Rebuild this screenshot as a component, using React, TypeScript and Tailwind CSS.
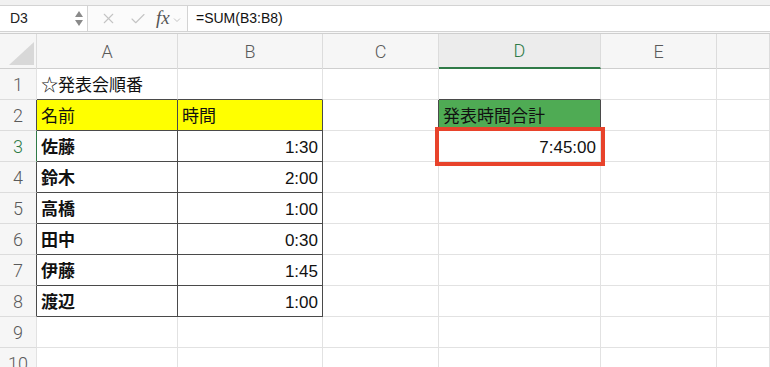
import { Check, X } from "lucide-react";

const cols = ["A", "B", "C", "D", "E", ""];
const colWidths = "grid-cols-[37px_141px_145px_116px_162px_116px_1fr]";

type Cell = { text?: string; align?: "left" | "right"; bold?: boolean; bg?: string };

const data: Record<number, Record<number, Cell>> = {
  1: { 1: { text: "☆発表会順番" } },
  2: {
    1: { text: "名前", bg: "bg-[#ffff00]" },
    2: { text: "時間", bg: "bg-[#ffff00]" },
    4: { text: "発表時間合計", bg: "bg-[#4fab54]" },
  },
  3: { 1: { text: "佐藤", bold: true }, 2: { text: "1:30", align: "right" }, 4: { text: "7:45:00", align: "right" } },
  4: { 1: { text: "鈴木", bold: true }, 2: { text: "2:00", align: "right" } },
  5: { 1: { text: "高橋", bold: true }, 2: { text: "1:00", align: "right" } },
  6: { 1: { text: "田中", bold: true }, 2: { text: "0:30", align: "right" } },
  7: { 1: { text: "伊藤", bold: true }, 2: { text: "1:45", align: "right" } },
  8: { 1: { text: "渡辺", bold: true }, 2: { text: "1:00", align: "right" } },
};

const rightColor = (r: number, c: number) => {
  if (r === 3 && c === 0) return "border-r-[#2f7a47]";
  if (r >= 2 && r <= 8 && c <= 2) return "border-r-[#4a4a4a]";
  if (r === 2 && (c === 3 || c === 4)) return "border-r-[#4a4a4a]";
  return "border-r-[#e2e2e2]";
};

const bottomColor = (r: number, c: number) => {
  if (r >= 1 && r <= 8 && (c === 1 || c === 2)) return "border-b-[#4a4a4a]";
  if ((r === 1 || r === 2) && c === 4) return "border-b-[#4a4a4a]";
  return "border-b-[#e2e2e2]";
};

const FormulaBar = () => (
  <div className="bg-[#f1f1f1] pt-[5px]">
    <div className="flex h-[27px] border-t border-b border-[#d3d3d3] bg-[#fbfbfb]">
      <div className="flex w-[88px] items-center justify-between border-r border-[#d3d3d3] bg-white pl-[10px] pr-[2px]">
        <span className="text-[14px] text-[#222]">D3</span>
        <div className="flex flex-col items-center gap-[3px] pr-[2px]">
          <span className="h-0 w-0 border-x-[4px] border-b-[6px] border-x-transparent border-b-[#8a8a8a]" />
          <span className="h-0 w-0 border-x-[4px] border-t-[6px] border-x-transparent border-t-[#8a8a8a]" />
        </div>
      </div>
      <div className="flex w-[99px] items-center pl-[12px]">
        <X size={17} strokeWidth={1.5} className="text-[#c4c4c4]" />
        <Check size={18} strokeWidth={1.5} className="ml-[12px] text-[#c4c4c4]" />
        <span className="ml-[9px] text-[19px] italic text-[#555]" style={{ fontFamily: '"Liberation Serif", serif' }}>
          fx
        </span>
        <svg width="8" height="6" viewBox="0 0 8 6" className="ml-[3px] mt-[3px]">
          <path d="M1 1.5 L4 4.5 L7 1.5" fill="none" stroke="#c4c4c4" strokeWidth="1" />
        </svg>
      </div>
      <div className="flex flex-1 items-center border-l border-[#d3d3d3] bg-white pl-[8px] text-[14px] text-[#111]">
        =SUM(B3:B8)
      </div>
    </div>
    <div className="h-[2px] bg-[#f7f7f7] border-b border-[#cfcfcf]" />
  </div>
);

const HeaderRow = () => (
  <div className={`grid ${colWidths} h-[35px] border-b border-[#cfcfcf] bg-[#f6f6f6]`}>
    <div className="border-r border-[#dcdcdc]">
      <svg width="37" height="35" viewBox="0 0 37 35" className="block">
        <path d="M9 31 L34 31 L34 8 Z" fill="#d8d8d8" />
      </svg>
    </div>
    {cols.map((c) => (
      <div
        key={c || "f"}
        className={
          c === "D"
            ? "flex items-center justify-center border-r border-[#dcdcdc] border-b-2 border-b-[#2f7a47] bg-[#ececec] text-[18px] font-light text-[#2f7a47]"
            : "flex items-center justify-center border-r border-[#dcdcdc] text-[18px] font-light text-[#5a5a5a]"
        }
        style={{ fontFamily: "Roboto, sans-serif" }}
      >
        {c}
      </div>
    ))}
  </div>
);

const App = () => {
  const rows = [1, 2, 3, 4, 5, 6, 7, 8, 9, 10];
  return (
    <div
      className="h-[367px] w-[770px] overflow-hidden bg-white"
      style={{ fontFamily: '"Liberation Sans", "Noto Sans CJK JP", sans-serif' }}
    >
      <FormulaBar />
      <HeaderRow />
      {rows.map((r) => (
        <div key={r} className={`grid ${colWidths} h-[31px]`}>
          {[0, 1, 2, 3, 4, 5, 6].map((c) => {
            if (c === 0) {
              return (
                <div
                  key={c}
                  className={`flex items-center justify-center border-r border-b bg-[#f6f6f6] text-[18px] font-light ${rightColor(r, c)} border-b-[#dcdcdc] ${
                    r === 3 ? "text-[#2f7a47]" : "text-[#5a5a5a]"
                  }`}
                  style={{ fontFamily: "Roboto, sans-serif" }}
                >
                  {r}
                </div>
              );
            }
            const cell = data[r]?.[c];
            const isTotal = r === 3 && c === 4;
            return (
              <div
                key={c}
                className={`flex items-center overflow-visible whitespace-nowrap border-r border-b pt-[3px] text-[17px] text-[#111] ${rightColor(r, c)} ${bottomColor(r, c)} ${
                  cell?.bg ?? ""
                } ${cell?.align === "right" ? "justify-end pr-[4px]" : "pl-[4px]"} ${cell?.bold ? "font-bold" : ""} ${
                  isTotal ? "relative z-10 outline-[4px] outline-solid outline-offset-[0px] outline-[#e8432b]" : ""
                }`}
              >
                {cell?.text}
              </div>
            );
          })}
        </div>
      ))}
    </div>
  );
};

export default App;
